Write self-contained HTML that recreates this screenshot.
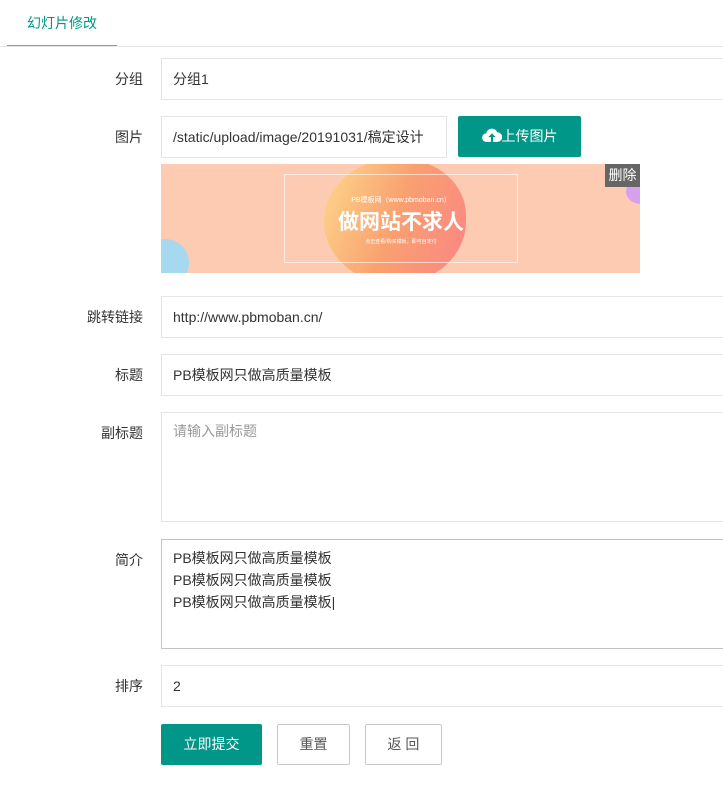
<!DOCTYPE html>
<html><head><meta charset="utf-8"><style>
*{box-sizing:border-box;margin:0;padding:0}
body{width:723px;height:789px;overflow:hidden;background:#fff;font-family:"Liberation Sans","Noto Sans CJK SC",sans-serif;font-size:14px;color:#333;position:relative}
.a{position:absolute}
.tab{left:7px;top:0;width:110px;height:47px;line-height:46px;text-align:center;color:#009688;font-size:14px;border-bottom:2px solid #5FB878}
.line{left:0;top:46px;width:723px;height:1px;background:#e6e6e6}
.lab{left:0;width:143px;text-align:right;line-height:43px;color:#333}
.in{left:161px;width:600px;border:1px solid #e6e6e6;padding-left:11px;line-height:41px;height:42px;color:#333;background:#fff}
.ta{line-height:22px;padding-top:7px}
.btn{height:41px;line-height:41px;text-align:center;border-radius:2px}
</style></head><body>
<div class="a tab">幻灯片修改</div><div class="a line"></div>
<div class="a lab" style="top:58px">分组</div><div class="a in" style="top:58px">分组1</div>
<div class="a lab" style="top:116px">图片</div><div class="a in" style="top:116px;width:286px;overflow:hidden;white-space:nowrap">/static/upload/image/20191031/稿定设计</div>
<div class="a btn" style="left:458px;top:116px;width:123px;background:#009688;color:#fff"><svg width="20" height="15" viewBox="0 0 18 14" style="vertical-align:-2px"><path d="M4 13a4 4 0 0 1-.5-8A5.5 5.5 0 0 1 14 4a4.5 4.5 0 0 1 0 9z" fill="#fff"/><path d="M9 5l-3.5 3.5H8V13h2V8.5h2.5z" fill="#009688"/></svg>上传图片</div>
<div class="a" style="left:161px;top:164px;width:479px;height:109px;background:#fccbb2;overflow:hidden">
<div class="a" style="left:163px;top:-5px;width:142px;height:125px;border-radius:50% 45% 50% 50%;background:linear-gradient(110deg,#fdd98c,#f9a070 50%,#fb8585)"></div>
<div class="a" style="left:-20px;top:75px;width:48px;height:48px;border-radius:50%;background:#a6d8ef"></div>
<div class="a" style="left:465px;top:15px;width:30px;height:25px;border-radius:50%;background:#d5a0ec"></div>
<div class="a" style="left:123px;top:10px;width:234px;height:89px;border:1px solid rgba(255,255,255,.6)"></div>
<div class="a" style="left:123px;top:31px;width:234px;text-align:center;color:#fff;font-size:7px">PB模板网（www.pbmoban.cn）</div>
<div class="a" style="left:123px;top:42px;width:234px;text-align:center;color:#fff;font-size:21px;font-weight:bold">做网站不求人</div>
<div class="a" style="left:123px;top:74px;width:234px;text-align:center;color:#fff;font-size:5px">点击查看/购买模板，即可自定付</div>
<div class="a" style="left:444px;top:0;width:35px;height:23px;background:#666;color:#fff;line-height:23px;text-align:center;font-size:14px">删除</div>
</div>
<div class="a lab" style="top:296px">跳转链接</div><div class="a in" style="top:296px">http://www.pbmoban.cn/</div>
<div class="a lab" style="top:354px">标题</div><div class="a in" style="top:354px">PB模板网只做高质量模板</div>
<div class="a lab" style="top:412px">副标题</div><div class="a in ta" style="top:412px;height:110px;color:#999">请输入副标题</div>
<div class="a lab" style="top:539px">简介</div><div class="a in ta" style="top:539px;height:110px;border-color:#c2c2c2">PB模板网只做高质量模板<br>PB模板网只做高质量模板<br>PB模板网只做高质量模板|</div>
<div class="a lab" style="top:665px">排序</div><div class="a in" style="top:665px">2</div>
<div class="a btn" style="left:161px;top:724px;width:101px;background:#009688;color:#fff">立即提交</div>
<div class="a btn" style="left:277px;top:724px;width:73px;border:1px solid #c9c9c9;line-height:39px;color:#555">重置</div>
<div class="a btn" style="left:365px;top:724px;width:77px;border:1px solid #c9c9c9;line-height:39px;color:#555">返 回</div>
</body></html>
